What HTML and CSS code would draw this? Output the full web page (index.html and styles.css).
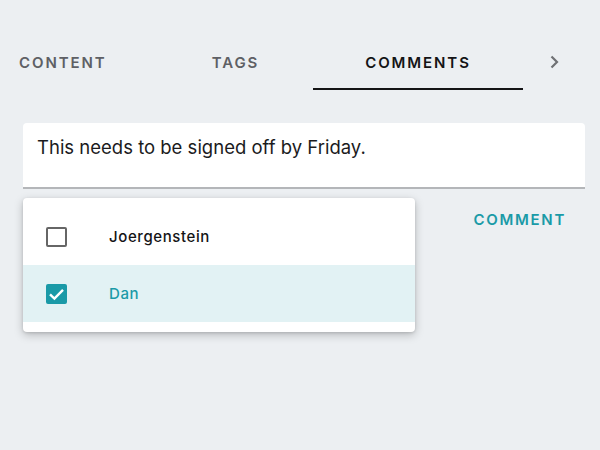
FILE: index.html
```html
<!DOCTYPE html>
<html>
<head>
<meta charset="utf-8">
<link rel="stylesheet" href="styles.css">
</head>
<body>
<div class="page">
  <nav class="tabs">
    <div class="tab tab-first">CONTENT</div>
    <div class="tab tab-second">TAGS</div>
    <div class="tab tab-active">COMMENTS</div>
    <div class="tab-next">
      <svg width="9" height="14" viewBox="0 0 9 14"><path d="M1.5 1.5 L7 7 L1.5 12.5" fill="none" stroke="#6f7175" stroke-width="2.2"/></svg>
    </div>
  </nav>
  <div class="composer">
    <div class="input">This needs to be signed off by Friday.</div>
    <div class="actions">
      <button class="comment-btn">COMMENT</button>
      <div class="menu">
        <div class="menu-item">
          <span class="box"></span>
          <span class="label">Joergenstein</span>
        </div>
        <div class="menu-item selected">
          <span class="box checked">
            <svg width="21" height="20" viewBox="0 0 21 20"><path d="M4 10.3 L8.4 14.5 L17 5.8" fill="none" stroke="#fff" stroke-width="2.4"/></svg>
          </span>
          <span class="label">Dan</span>
        </div>
      </div>
    </div>
  </div>
</div>
</body>
</html>
```

FILE: styles.css
```css
html, body {
  margin: 0;
  padding: 0;
  background: #eceff2;
}
.page {
  width: 600px;
  height: 450px;
  overflow: hidden;
  font-family: Inter, "Liberation Sans", sans-serif;
}
.tabs {
  display: flex;
  padding-top: 34px;
  height: 56px;
}
.tab {
  box-sizing: border-box;
  height: 56px;
  display: flex;
  align-items: center;
  font-size: 15px;
  font-weight: 600;
  letter-spacing: 1.9px;
  color: #5e6065;
}
.tab-first {
  width: 158px;
  padding-left: 19px;
}
.tab-second {
  width: 155px;
  justify-content: center;
}
.tab-active {
  width: 210px;
  justify-content: center;
  color: #141416;
  border-bottom: 2.5px solid #141416;
  padding-top: 2px;
}
.tab-next {
  display: flex;
  align-items: center;
  padding-left: 27px;
  height: 56px;
}
.composer {
  margin: 33px 15px 0 23px;
  position: relative;
}
.input {
  box-sizing: border-box;
  height: 66px;
  background: #fff;
  border-radius: 4px 4px 0 0;
  border-bottom: 2px solid #b4b6b9;
  padding: 12px 14px 0;
  font-size: 18.5px;
  line-height: 24px;
  color: #1b1b1d;
}
.actions {
  display: flex;
  justify-content: flex-end;
  padding-top: 12px;
}
.comment-btn {
  height: 36px;
  border: none;
  background: transparent;
  padding: 0 19px 0 20px;
  font-family: Inter, "Liberation Sans", sans-serif;
  font-size: 15px;
  font-weight: 600;
  letter-spacing: 1.7px;
  color: #1a9aa7;
}
.menu {
  position: absolute;
  left: 0;
  top: 75px;
  width: 392px;
  padding: 10px 0;
  background: #fff;
  border-radius: 4px;
  box-shadow: 0 3px 10px rgba(0, 0, 0, 0.22), 0 1px 3px rgba(0, 0, 0, 0.12);
}
.menu-item {
  display: flex;
  align-items: center;
  height: 57px;
  padding-left: 23px;
}
.menu-item.selected {
  background: #e2f2f4;
}
.box {
  box-sizing: border-box;
  position: relative;
  width: 21px;
  height: 20px;
  border: 2px solid #666;
  border-radius: 2px;
  margin-right: 42px;
}
.box.checked {
  background: #1a9aa7;
  border-color: #1a9aa7;
}
.box svg {
  position: absolute;
  left: -2px;
  top: -2px;
}
.label {
  font-size: 15px;
  font-weight: 500;
  letter-spacing: 0.6px;
  color: #141416;
}
.selected .label {
  color: #1a9aa7;
}
```
